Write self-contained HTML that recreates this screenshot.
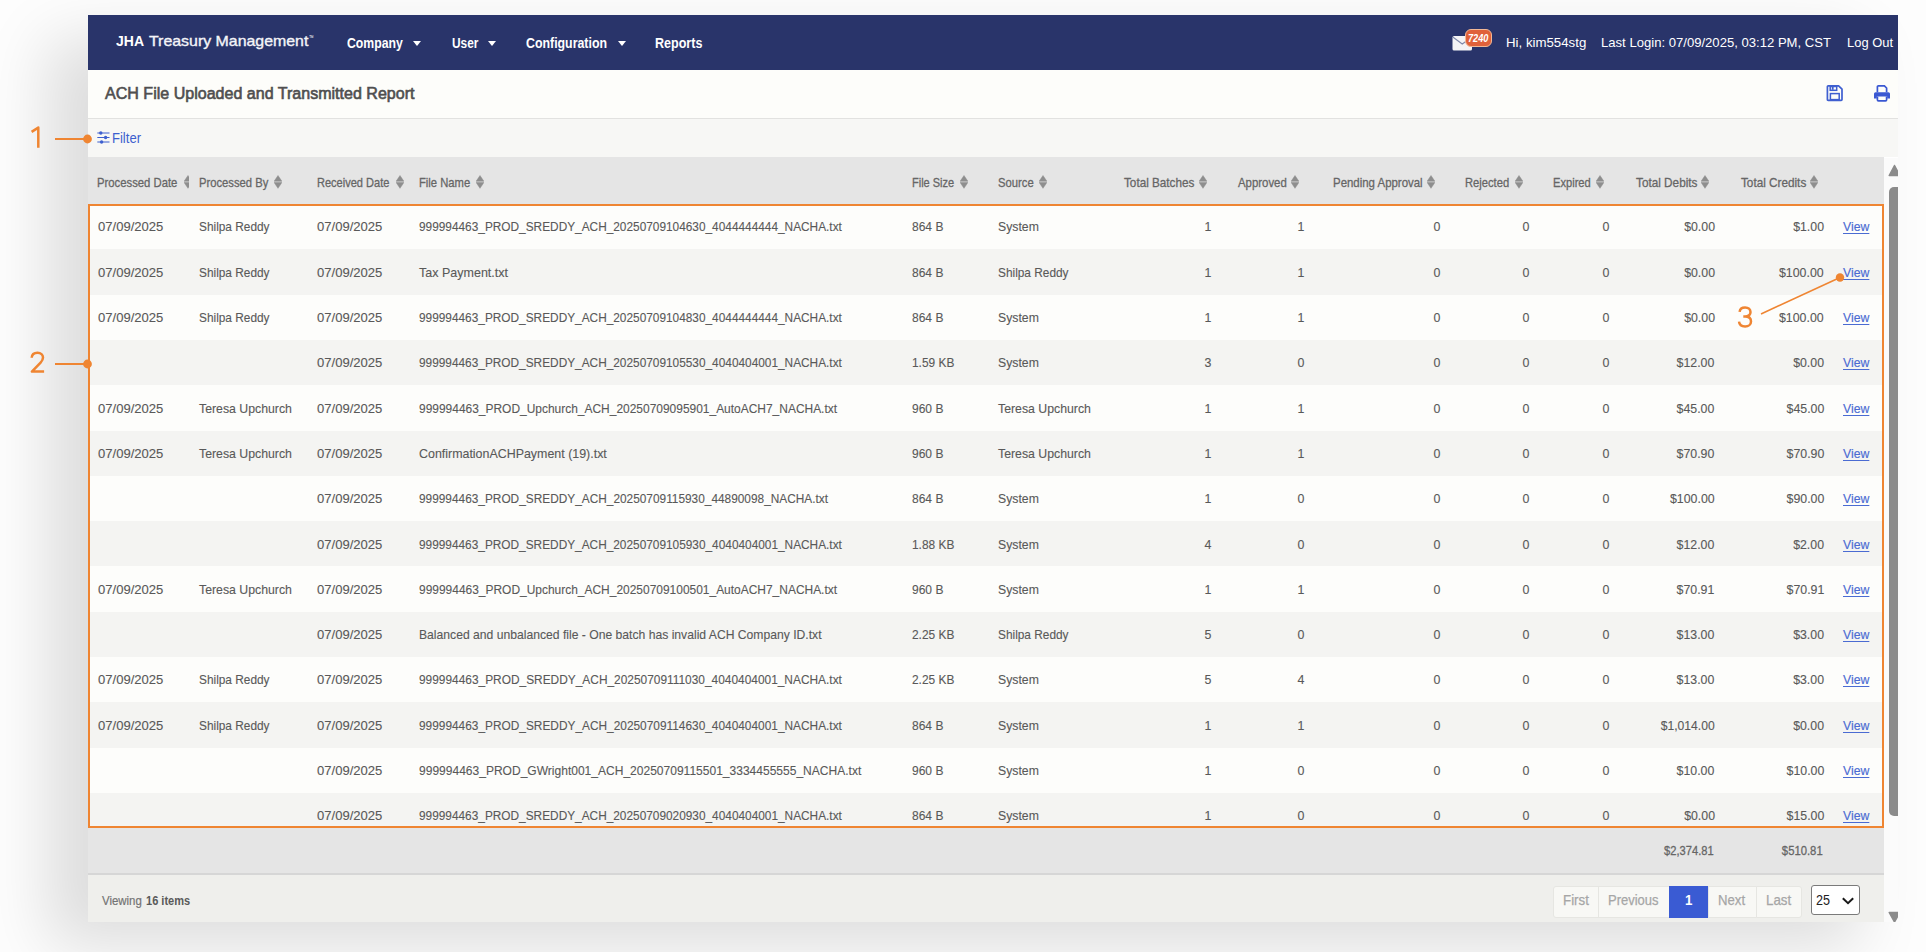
<!DOCTYPE html>
<html><head><meta charset="utf-8"><title>ACH File Uploaded and Transmitted Report</title>
<style>
html,body{margin:0;padding:0;}
body{width:1926px;height:952px;position:relative;overflow:hidden;background:#fdfdfd;font-family:"Liberation Sans", sans-serif;}
.abs{position:absolute;}
</style></head><body>
<!-- frame shadow -->
<div class="abs" style="left:88px;top:15px;width:1810px;height:907px;box-shadow:-40px 24px 60px rgba(0,0,0,0.13);background:#fff"></div>
<!-- nav -->
<div class="abs" style="left:88px;top:15px;width:1810px;height:54.5px;background:#29346a"></div>
<!-- title band -->
<div class="abs" style="left:88px;top:69.5px;width:1810px;height:48.5px;background:#fdfdfa;border-bottom:1px solid #e2e2e0"></div>
<!-- filter band -->
<div class="abs" style="left:88px;top:119px;width:1810px;height:38.2px;background:#f7f7f5"></div>
<!-- header -->
<div class="abs" style="left:88px;top:157.2px;width:1796px;height:46.8px;background:#e5e5e5"></div>
<!-- rows -->
<div style="position:absolute;left:88px;top:204.00px;width:1796px;height:45.60px;background:#fdfdfb"></div>
<div style="position:absolute;left:88px;top:249.30px;width:1796px;height:45.60px;background:#f4f4f2"></div>
<div style="position:absolute;left:88px;top:294.60px;width:1796px;height:45.60px;background:#fdfdfb"></div>
<div style="position:absolute;left:88px;top:339.90px;width:1796px;height:45.60px;background:#f4f4f2"></div>
<div style="position:absolute;left:88px;top:385.20px;width:1796px;height:45.60px;background:#fdfdfb"></div>
<div style="position:absolute;left:88px;top:430.50px;width:1796px;height:45.60px;background:#f4f4f2"></div>
<div style="position:absolute;left:88px;top:475.80px;width:1796px;height:45.60px;background:#fdfdfb"></div>
<div style="position:absolute;left:88px;top:521.10px;width:1796px;height:45.60px;background:#f4f4f2"></div>
<div style="position:absolute;left:88px;top:566.40px;width:1796px;height:45.60px;background:#fdfdfb"></div>
<div style="position:absolute;left:88px;top:611.70px;width:1796px;height:45.60px;background:#f4f4f2"></div>
<div style="position:absolute;left:88px;top:657.00px;width:1796px;height:45.60px;background:#fdfdfb"></div>
<div style="position:absolute;left:88px;top:702.30px;width:1796px;height:45.60px;background:#f4f4f2"></div>
<div style="position:absolute;left:88px;top:747.60px;width:1796px;height:45.60px;background:#fdfdfb"></div>
<div style="position:absolute;left:88px;top:792.90px;width:1796px;height:45.60px;background:#f4f4f2"></div>
<!-- orange box -->
<div class="abs" style="left:88px;top:204px;width:1792px;height:620px;border:2px solid #ef8532"></div>
<!-- totals -->
<div class="abs" style="left:88px;top:828px;width:1796px;height:45px;background:#e5e5e5"></div>
<div class="abs" style="left:88px;top:873px;width:1796px;height:2px;background:#d6d6d6"></div>
<!-- footer -->
<div class="abs" style="left:88px;top:875px;width:1796px;height:47px;background:#efefec"></div>
<!-- scrollbar -->
<div class="abs" style="left:1884px;top:157.5px;width:14px;height:764.5px;background:#fbfbfb;overflow:hidden">
<div class="abs" style="left:5px;top:29.5px;width:14px;height:629px;background:#8b8b8b;border-radius:5px"></div>
<svg class="abs" style="left:0;top:2.5px" width="14" height="20" viewBox="0 0 14 20"><path d="M5.2 15.5 L10.5 5.5 L15.8 15.5 Z" fill="#8b8b8b" stroke="#8b8b8b" stroke-width="1.5" stroke-linejoin="round"/></svg>
<svg class="abs" style="left:0;top:748.5px" width="14" height="16" viewBox="0 0 14 16"><path d="M5.2 6.5 L10.5 16 L15.8 6.5 Z" fill="#8b8b8b" stroke="#8b8b8b" stroke-width="1.5" stroke-linejoin="round"/></svg>
</div>
<!-- right cover of frame beyond scrollbar -->
<!-- envelope + badge -->
<svg class="abs" style="left:1452px;top:35px" width="21" height="16" viewBox="0 0 21 16"><rect x="0.5" y="1" width="19.5" height="14.5" rx="1.5" fill="#f4f4f6"/><path d="M0.8 2 L10.25 9 L20 2" stroke="#7f88a8" stroke-width="1.1" fill="none"/></svg>
<div class="abs" style="left:1465px;top:29px;width:25px;height:15.5px;border-radius:6px;background:#e0613a;border:1px solid #f2b896"></div>
<!-- save icon -->
<svg class="abs" style="left:1826px;top:84px" width="18" height="18" viewBox="0 0 18 18">
<path d="M2.2 1.8 H12.6 L16 5.2 V15.6 Q16 16.4 15.2 16.4 H2.2 Q1.4 16.4 1.4 15.6 V2.6 Q1.4 1.8 2.2 1.8 Z" fill="none" stroke="#3f5fd0" stroke-width="1.7" stroke-linejoin="round"/>
<rect x="4.2" y="2.5" width="6.5" height="3.8" fill="none" stroke="#3f5fd0" stroke-width="1.5"/>
<rect x="5.8" y="2.8" width="1.8" height="3" fill="#3f5fd0"/>
<rect x="4.4" y="9.6" width="8.8" height="6" fill="none" stroke="#3f5fd0" stroke-width="1.5"/>
</svg>
<!-- print icon -->
<svg class="abs" style="left:1873px;top:84px" width="18" height="18" viewBox="0 0 18 18">
<path d="M4.4 8.3 V2.8 Q4.4 1.8 5.4 1.8 H11.4 L13.6 4 V8.3" fill="none" stroke="#3a58d2" stroke-width="1.7"/>
<path d="M2.6 8.2 H15.4 Q17 8.2 17 9.8 V14.4 H14.2 V12.6 H3.8 V14.4 H1 V9.8 Q1 8.2 2.6 8.2 Z" fill="#3a58d2"/>
<path d="M4.4 12.6 V15.8 Q4.4 16.9 5.4 16.9 H12.6 Q13.6 16.9 13.6 15.8 V12.6" fill="none" stroke="#3a58d2" stroke-width="1.7"/>
</svg>
<!-- filter icon -->
<svg class="abs" style="left:96.5px;top:131px" width="13" height="13" viewBox="0 0 13 13">
<g stroke="#3d5fcf" stroke-width="1"><line x1="0.3" y1="2" x2="12.5" y2="2"/><line x1="0.3" y1="6.5" x2="12.5" y2="6.5"/><line x1="0.3" y1="11" x2="12.5" y2="11"/></g>
<g fill="#3d5fcf"><circle cx="3.8" cy="2" r="1.7"/><circle cx="8.6" cy="6.5" r="1.7"/><circle cx="4.6" cy="11" r="1.7"/></g>
</svg>
<div style="position:absolute;left:413px;top:40.5px;width:0;height:0;border-left:4px solid transparent;border-right:4px solid transparent;border-top:5px solid #fff"></div>
<div style="position:absolute;left:488.3px;top:40.5px;width:0;height:0;border-left:4px solid transparent;border-right:4px solid transparent;border-top:5px solid #fff"></div>
<div style="position:absolute;left:617.7px;top:40.5px;width:0;height:0;border-left:4px solid transparent;border-right:4px solid transparent;border-top:5px solid #fff"></div>
<svg style="position:absolute;left:183.5px;top:174.5px;overflow:hidden" width="5.8" height="14" viewBox="0 0 5.8 14"><path d="M4 0.5 L7.9 6.3 L0.1 6.3 Z M4 13.3 L7.9 7.5 L0.1 7.5 Z" fill="#8e8e8e" stroke="#8e8e8e" stroke-width="0.5" stroke-linejoin="round"/></svg>
<svg style="position:absolute;left:273.7px;top:174.5px;overflow:hidden" width="8" height="14" viewBox="0 0 8 14"><path d="M4 0.5 L7.9 6.3 L0.1 6.3 Z M4 13.3 L7.9 7.5 L0.1 7.5 Z" fill="#8e8e8e" stroke="#8e8e8e" stroke-width="0.5" stroke-linejoin="round"/></svg>
<svg style="position:absolute;left:396px;top:174.5px;overflow:hidden" width="8" height="14" viewBox="0 0 8 14"><path d="M4 0.5 L7.9 6.3 L0.1 6.3 Z M4 13.3 L7.9 7.5 L0.1 7.5 Z" fill="#8e8e8e" stroke="#8e8e8e" stroke-width="0.5" stroke-linejoin="round"/></svg>
<svg style="position:absolute;left:475.8px;top:174.5px;overflow:hidden" width="8" height="14" viewBox="0 0 8 14"><path d="M4 0.5 L7.9 6.3 L0.1 6.3 Z M4 13.3 L7.9 7.5 L0.1 7.5 Z" fill="#8e8e8e" stroke="#8e8e8e" stroke-width="0.5" stroke-linejoin="round"/></svg>
<svg style="position:absolute;left:960px;top:174.5px;overflow:hidden" width="8" height="14" viewBox="0 0 8 14"><path d="M4 0.5 L7.9 6.3 L0.1 6.3 Z M4 13.3 L7.9 7.5 L0.1 7.5 Z" fill="#8e8e8e" stroke="#8e8e8e" stroke-width="0.5" stroke-linejoin="round"/></svg>
<svg style="position:absolute;left:1039.3px;top:174.5px;overflow:hidden" width="8" height="14" viewBox="0 0 8 14"><path d="M4 0.5 L7.9 6.3 L0.1 6.3 Z M4 13.3 L7.9 7.5 L0.1 7.5 Z" fill="#8e8e8e" stroke="#8e8e8e" stroke-width="0.5" stroke-linejoin="round"/></svg>
<svg style="position:absolute;left:1198.8px;top:174.5px;overflow:hidden" width="8" height="14" viewBox="0 0 8 14"><path d="M4 0.5 L7.9 6.3 L0.1 6.3 Z M4 13.3 L7.9 7.5 L0.1 7.5 Z" fill="#8e8e8e" stroke="#8e8e8e" stroke-width="0.5" stroke-linejoin="round"/></svg>
<svg style="position:absolute;left:1290.7px;top:174.5px;overflow:hidden" width="8" height="14" viewBox="0 0 8 14"><path d="M4 0.5 L7.9 6.3 L0.1 6.3 Z M4 13.3 L7.9 7.5 L0.1 7.5 Z" fill="#8e8e8e" stroke="#8e8e8e" stroke-width="0.5" stroke-linejoin="round"/></svg>
<svg style="position:absolute;left:1427.4px;top:174.5px;overflow:hidden" width="8" height="14" viewBox="0 0 8 14"><path d="M4 0.5 L7.9 6.3 L0.1 6.3 Z M4 13.3 L7.9 7.5 L0.1 7.5 Z" fill="#8e8e8e" stroke="#8e8e8e" stroke-width="0.5" stroke-linejoin="round"/></svg>
<svg style="position:absolute;left:1515.4px;top:174.5px;overflow:hidden" width="8" height="14" viewBox="0 0 8 14"><path d="M4 0.5 L7.9 6.3 L0.1 6.3 Z M4 13.3 L7.9 7.5 L0.1 7.5 Z" fill="#8e8e8e" stroke="#8e8e8e" stroke-width="0.5" stroke-linejoin="round"/></svg>
<svg style="position:absolute;left:1596px;top:174.5px;overflow:hidden" width="8" height="14" viewBox="0 0 8 14"><path d="M4 0.5 L7.9 6.3 L0.1 6.3 Z M4 13.3 L7.9 7.5 L0.1 7.5 Z" fill="#8e8e8e" stroke="#8e8e8e" stroke-width="0.5" stroke-linejoin="round"/></svg>
<svg style="position:absolute;left:1701px;top:174.5px;overflow:hidden" width="8" height="14" viewBox="0 0 8 14"><path d="M4 0.5 L7.9 6.3 L0.1 6.3 Z M4 13.3 L7.9 7.5 L0.1 7.5 Z" fill="#8e8e8e" stroke="#8e8e8e" stroke-width="0.5" stroke-linejoin="round"/></svg>
<svg style="position:absolute;left:1810px;top:174.5px;overflow:hidden" width="8" height="14" viewBox="0 0 8 14"><path d="M4 0.5 L7.9 6.3 L0.1 6.3 Z M4 13.3 L7.9 7.5 L0.1 7.5 Z" fill="#8e8e8e" stroke="#8e8e8e" stroke-width="0.5" stroke-linejoin="round"/></svg>
<div style="position:absolute;left:1553px;top:886px;width:44.0px;height:30px;background:#f8f8f5;border:1px solid #e6e6e2;border-radius:3px 0 0 3px;"></div>
<div style="position:absolute;left:1598px;top:886px;width:70.3px;height:30px;background:#f8f8f5;border:1px solid #e6e6e2;"></div>
<div style="position:absolute;left:1669.3px;top:886px;width:38.7px;height:32px;background:#3a5bd3"></div>
<div style="position:absolute;left:1708px;top:886px;width:47.0px;height:30px;background:#f8f8f5;border:1px solid #e6e6e2;"></div>
<div style="position:absolute;left:1756px;top:886px;width:44.0px;height:30px;background:#f8f8f5;border:1px solid #e6e6e2;border-radius:0 3px 3px 0;"></div>
<div style="position:absolute;left:1811px;top:885px;width:46.5px;height:28px;background:#fff;border:1.5px solid #7a7a7a;border-radius:3px"></div>
<svg style="position:absolute;left:1841px;top:896px" width="14" height="10" viewBox="0 0 14 10"><path d="M1.8 2.2 L7 7.2 L12.2 2.2" stroke="#1a1a1a" stroke-width="2" fill="none"/></svg>
<span style="position:absolute;white-space:pre;font-family:'Liberation Sans', sans-serif;font-size:15px;font-weight:700;color:#fff;line-height:normal;left:115.60px;transform-origin:0 0;top:32.48px;transform:scaleX(0.9328);">JHA</span>
<span style="position:absolute;white-space:pre;font-family:'Liberation Sans', sans-serif;font-size:15px;font-weight:400;color:#f4f4f8;line-height:normal;left:148.60px;transform-origin:0 0;top:32.48px;transform:scaleX(1.0601);-webkit-text-stroke:0.35px #f4f4f8;">Treasury Management</span>
<span style="position:absolute;white-space:pre;font-family:'Liberation Sans', sans-serif;font-size:7px;font-weight:400;color:#fff;line-height:normal;left:308.50px;transform-origin:0 0;top:34.09px;transform:scaleX(0.6429);">™</span>
<span style="position:absolute;white-space:pre;font-family:'Liberation Sans', sans-serif;font-size:14.2px;font-weight:700;color:#fff;line-height:normal;left:346.90px;transform-origin:0 0;top:35.31px;transform:scaleX(0.8632);">Company</span>
<span style="position:absolute;white-space:pre;font-family:'Liberation Sans', sans-serif;font-size:14.2px;font-weight:700;color:#fff;line-height:normal;left:451.50px;transform-origin:0 0;top:35.31px;transform:scaleX(0.8396);">User</span>
<span style="position:absolute;white-space:pre;font-family:'Liberation Sans', sans-serif;font-size:14.2px;font-weight:700;color:#fff;line-height:normal;left:526.40px;transform-origin:0 0;top:35.31px;transform:scaleX(0.8710);">Configuration</span>
<span style="position:absolute;white-space:pre;font-family:'Liberation Sans', sans-serif;font-size:14.2px;font-weight:700;color:#fff;line-height:normal;left:655.20px;transform-origin:0 0;top:35.31px;transform:scaleX(0.8842);">Reports</span>
<span style="position:absolute;white-space:pre;font-family:'Liberation Sans', sans-serif;font-size:13.6px;font-weight:400;color:#fff;line-height:normal;left:1506.10px;transform-origin:0 0;top:35.46px;transform:scaleX(0.9750);">Hi, kim554stg</span>
<span style="position:absolute;white-space:pre;font-family:'Liberation Sans', sans-serif;font-size:13.6px;font-weight:400;color:#fff;line-height:normal;left:1601.30px;transform-origin:0 0;top:35.46px;transform:scaleX(0.9631);">Last Login: 07/09/2025, 03:12 PM, CST</span>
<span style="position:absolute;white-space:pre;font-family:'Liberation Sans', sans-serif;font-size:13.6px;font-weight:400;color:#fff;line-height:normal;left:1846.70px;transform-origin:0 0;top:35.46px;transform:scaleX(0.9509);">Log Out</span>
<span style="position:absolute;white-space:pre;font-family:'Liberation Sans', sans-serif;font-size:11.2px;font-weight:700;color:#fff;line-height:normal;left:1467.80px;transform-origin:0 0;top:32.15px;transform:scaleX(0.8196);font-style:italic;">7240</span>
<span style="position:absolute;white-space:pre;font-family:'Liberation Sans', sans-serif;font-size:17.2px;font-weight:400;color:#4f4f4f;line-height:normal;left:105.30px;transform-origin:0 0;top:83.16px;transform:scaleX(0.9336);-webkit-text-stroke:0.65px #4f4f4f;">ACH File Uploaded and Transmitted Report</span>
<span style="position:absolute;white-space:pre;font-family:'Liberation Sans', sans-serif;font-size:14.2px;font-weight:400;color:#3d5fcf;line-height:normal;left:112.30px;transform-origin:0 0;top:130.41px;transform:scaleX(0.9197);">Filter</span>
<span style="position:absolute;white-space:pre;font-family:'Liberation Sans', sans-serif;font-size:13.2px;font-weight:400;color:#666;line-height:normal;left:97.40px;transform-origin:0 0;top:175.32px;transform:scaleX(0.8567);-webkit-text-stroke:0.3px #666;">Processed Date</span>
<span style="position:absolute;white-space:pre;font-family:'Liberation Sans', sans-serif;font-size:13.2px;font-weight:400;color:#666;line-height:normal;left:199.00px;transform-origin:0 0;top:175.32px;transform:scaleX(0.8526);-webkit-text-stroke:0.3px #666;">Processed By</span>
<span style="position:absolute;white-space:pre;font-family:'Liberation Sans', sans-serif;font-size:13.2px;font-weight:400;color:#666;line-height:normal;left:317.40px;transform-origin:0 0;top:175.32px;transform:scaleX(0.8368);-webkit-text-stroke:0.3px #666;">Received Date</span>
<span style="position:absolute;white-space:pre;font-family:'Liberation Sans', sans-serif;font-size:13.2px;font-weight:400;color:#666;line-height:normal;left:418.60px;transform-origin:0 0;top:175.32px;transform:scaleX(0.8527);-webkit-text-stroke:0.3px #666;">File Name</span>
<span style="position:absolute;white-space:pre;font-family:'Liberation Sans', sans-serif;font-size:13.2px;font-weight:400;color:#666;line-height:normal;left:912.00px;transform-origin:0 0;top:175.32px;transform:scaleX(0.8340);-webkit-text-stroke:0.3px #666;">File Size</span>
<span style="position:absolute;white-space:pre;font-family:'Liberation Sans', sans-serif;font-size:13.2px;font-weight:400;color:#666;line-height:normal;left:998.00px;transform-origin:0 0;top:175.32px;transform:scaleX(0.8527);-webkit-text-stroke:0.3px #666;">Source</span>
<span style="position:absolute;white-space:pre;font-family:'Liberation Sans', sans-serif;font-size:13.2px;font-weight:400;color:#666;line-height:normal;left:1124.40px;transform-origin:0 0;top:175.32px;transform:scaleX(0.8889);-webkit-text-stroke:0.3px #666;">Total Batches</span>
<span style="position:absolute;white-space:pre;font-family:'Liberation Sans', sans-serif;font-size:13.2px;font-weight:400;color:#666;line-height:normal;left:1237.60px;transform-origin:0 0;top:175.32px;transform:scaleX(0.8637);-webkit-text-stroke:0.3px #666;">Approved</span>
<span style="position:absolute;white-space:pre;font-family:'Liberation Sans', sans-serif;font-size:13.2px;font-weight:400;color:#666;line-height:normal;left:1332.50px;transform-origin:0 0;top:175.32px;transform:scaleX(0.8669);-webkit-text-stroke:0.3px #666;">Pending Approval</span>
<span style="position:absolute;white-space:pre;font-family:'Liberation Sans', sans-serif;font-size:13.2px;font-weight:400;color:#666;line-height:normal;left:1465.30px;transform-origin:0 0;top:175.32px;transform:scaleX(0.8479);-webkit-text-stroke:0.3px #666;">Rejected</span>
<span style="position:absolute;white-space:pre;font-family:'Liberation Sans', sans-serif;font-size:13.2px;font-weight:400;color:#666;line-height:normal;left:1552.50px;transform-origin:0 0;top:175.32px;transform:scaleX(0.8445);-webkit-text-stroke:0.3px #666;">Expired</span>
<span style="position:absolute;white-space:pre;font-family:'Liberation Sans', sans-serif;font-size:13.2px;font-weight:400;color:#666;line-height:normal;left:1636.00px;transform-origin:0 0;top:175.32px;transform:scaleX(0.8915);-webkit-text-stroke:0.3px #666;">Total Debits</span>
<span style="position:absolute;white-space:pre;font-family:'Liberation Sans', sans-serif;font-size:13.2px;font-weight:400;color:#666;line-height:normal;left:1741.20px;transform-origin:0 0;top:175.32px;transform:scaleX(0.8903);-webkit-text-stroke:0.3px #666;">Total Credits</span>
<span style="position:absolute;white-space:pre;font-family:'Liberation Sans', sans-serif;font-size:13.2px;font-weight:400;color:#595959;line-height:normal;left:97.50px;transform-origin:0 0;top:219.42px;transform:scaleX(0.9902);-webkit-text-stroke:0.12px #595959;">07/09/2025</span>
<span style="position:absolute;white-space:pre;font-family:'Liberation Sans', sans-serif;font-size:13.2px;font-weight:400;color:#595959;line-height:normal;left:199.00px;transform-origin:0 0;top:219.42px;transform:scaleX(0.8987);-webkit-text-stroke:0.12px #595959;">Shilpa Reddy</span>
<span style="position:absolute;white-space:pre;font-family:'Liberation Sans', sans-serif;font-size:13.2px;font-weight:400;color:#595959;line-height:normal;left:317.40px;transform-origin:0 0;top:219.42px;transform:scaleX(0.9902);-webkit-text-stroke:0.12px #595959;">07/09/2025</span>
<span style="position:absolute;white-space:pre;font-family:'Liberation Sans', sans-serif;font-size:13.2px;font-weight:400;color:#595959;line-height:normal;left:419.30px;transform-origin:0 0;top:219.42px;transform:scaleX(0.8984);-webkit-text-stroke:0.12px #595959;">999994463_PROD_SREDDY_ACH_20250709104630_4044444444_NACHA.txt</span>
<span style="position:absolute;white-space:pre;font-family:'Liberation Sans', sans-serif;font-size:13.2px;font-weight:400;color:#595959;line-height:normal;left:912.00px;transform-origin:0 0;top:219.42px;transform:scaleX(0.9116);-webkit-text-stroke:0.12px #595959;">864 B</span>
<span style="position:absolute;white-space:pre;font-family:'Liberation Sans', sans-serif;font-size:13.2px;font-weight:400;color:#595959;line-height:normal;left:998.00px;transform-origin:0 0;top:219.42px;transform:scaleX(0.9290);-webkit-text-stroke:0.12px #595959;">System</span>
<span style="position:absolute;white-space:pre;font-family:'Liberation Sans', sans-serif;font-size:13.2px;font-weight:400;color:#595959;line-height:normal;right:714.60px;transform-origin:100% 0;top:219.42px;transform:scaleX(0.9405);-webkit-text-stroke:0.12px #595959;">1</span>
<span style="position:absolute;white-space:pre;font-family:'Liberation Sans', sans-serif;font-size:13.2px;font-weight:400;color:#595959;line-height:normal;right:622.00px;transform-origin:100% 0;top:219.42px;transform:scaleX(0.9405);-webkit-text-stroke:0.12px #595959;">1</span>
<span style="position:absolute;white-space:pre;font-family:'Liberation Sans', sans-serif;font-size:13.2px;font-weight:400;color:#595959;line-height:normal;right:485.40px;transform-origin:100% 0;top:219.42px;transform:scaleX(0.9405);-webkit-text-stroke:0.12px #595959;">0</span>
<span style="position:absolute;white-space:pre;font-family:'Liberation Sans', sans-serif;font-size:13.2px;font-weight:400;color:#595959;line-height:normal;right:397.00px;transform-origin:100% 0;top:219.42px;transform:scaleX(0.9405);-webkit-text-stroke:0.12px #595959;">0</span>
<span style="position:absolute;white-space:pre;font-family:'Liberation Sans', sans-serif;font-size:13.2px;font-weight:400;color:#595959;line-height:normal;right:316.60px;transform-origin:100% 0;top:219.42px;transform:scaleX(0.9405);-webkit-text-stroke:0.12px #595959;">0</span>
<span style="position:absolute;white-space:pre;font-family:'Liberation Sans', sans-serif;font-size:13.2px;font-weight:400;color:#595959;line-height:normal;right:211.40px;transform-origin:100% 0;top:219.42px;transform:scaleX(0.9348);-webkit-text-stroke:0.12px #595959;">$0.00</span>
<span style="position:absolute;white-space:pre;font-family:'Liberation Sans', sans-serif;font-size:13.2px;font-weight:400;color:#595959;line-height:normal;right:102.00px;transform-origin:100% 0;top:219.42px;transform:scaleX(0.9348);-webkit-text-stroke:0.12px #595959;">$1.00</span>
<span style="position:absolute;white-space:pre;font-family:'Liberation Sans', sans-serif;font-size:13.2px;font-weight:400;color:#4a6bd2;line-height:normal;left:1843.00px;transform-origin:0 0;top:219.42px;transform:scaleX(0.9291);text-decoration:underline;text-decoration-thickness:1.3px;text-underline-offset:1.5px;-webkit-text-stroke:0.15px #4a6bd2;">View</span>
<span style="position:absolute;white-space:pre;font-family:'Liberation Sans', sans-serif;font-size:13.2px;font-weight:400;color:#595959;line-height:normal;left:97.50px;transform-origin:0 0;top:264.72px;transform:scaleX(0.9902);-webkit-text-stroke:0.12px #595959;">07/09/2025</span>
<span style="position:absolute;white-space:pre;font-family:'Liberation Sans', sans-serif;font-size:13.2px;font-weight:400;color:#595959;line-height:normal;left:199.00px;transform-origin:0 0;top:264.72px;transform:scaleX(0.8987);-webkit-text-stroke:0.12px #595959;">Shilpa Reddy</span>
<span style="position:absolute;white-space:pre;font-family:'Liberation Sans', sans-serif;font-size:13.2px;font-weight:400;color:#595959;line-height:normal;left:317.40px;transform-origin:0 0;top:264.72px;transform:scaleX(0.9902);-webkit-text-stroke:0.12px #595959;">07/09/2025</span>
<span style="position:absolute;white-space:pre;font-family:'Liberation Sans', sans-serif;font-size:13.2px;font-weight:400;color:#595959;line-height:normal;left:419.30px;transform-origin:0 0;top:264.72px;transform:scaleX(0.9486);-webkit-text-stroke:0.12px #595959;">Tax Payment.txt</span>
<span style="position:absolute;white-space:pre;font-family:'Liberation Sans', sans-serif;font-size:13.2px;font-weight:400;color:#595959;line-height:normal;left:912.00px;transform-origin:0 0;top:264.72px;transform:scaleX(0.9116);-webkit-text-stroke:0.12px #595959;">864 B</span>
<span style="position:absolute;white-space:pre;font-family:'Liberation Sans', sans-serif;font-size:13.2px;font-weight:400;color:#595959;line-height:normal;left:998.00px;transform-origin:0 0;top:264.72px;transform:scaleX(0.8987);-webkit-text-stroke:0.12px #595959;">Shilpa Reddy</span>
<span style="position:absolute;white-space:pre;font-family:'Liberation Sans', sans-serif;font-size:13.2px;font-weight:400;color:#595959;line-height:normal;right:714.60px;transform-origin:100% 0;top:264.72px;transform:scaleX(0.9405);-webkit-text-stroke:0.12px #595959;">1</span>
<span style="position:absolute;white-space:pre;font-family:'Liberation Sans', sans-serif;font-size:13.2px;font-weight:400;color:#595959;line-height:normal;right:622.00px;transform-origin:100% 0;top:264.72px;transform:scaleX(0.9405);-webkit-text-stroke:0.12px #595959;">1</span>
<span style="position:absolute;white-space:pre;font-family:'Liberation Sans', sans-serif;font-size:13.2px;font-weight:400;color:#595959;line-height:normal;right:485.40px;transform-origin:100% 0;top:264.72px;transform:scaleX(0.9405);-webkit-text-stroke:0.12px #595959;">0</span>
<span style="position:absolute;white-space:pre;font-family:'Liberation Sans', sans-serif;font-size:13.2px;font-weight:400;color:#595959;line-height:normal;right:397.00px;transform-origin:100% 0;top:264.72px;transform:scaleX(0.9405);-webkit-text-stroke:0.12px #595959;">0</span>
<span style="position:absolute;white-space:pre;font-family:'Liberation Sans', sans-serif;font-size:13.2px;font-weight:400;color:#595959;line-height:normal;right:316.60px;transform-origin:100% 0;top:264.72px;transform:scaleX(0.9405);-webkit-text-stroke:0.12px #595959;">0</span>
<span style="position:absolute;white-space:pre;font-family:'Liberation Sans', sans-serif;font-size:13.2px;font-weight:400;color:#595959;line-height:normal;right:211.40px;transform-origin:100% 0;top:264.72px;transform:scaleX(0.9348);-webkit-text-stroke:0.12px #595959;">$0.00</span>
<span style="position:absolute;white-space:pre;font-family:'Liberation Sans', sans-serif;font-size:13.2px;font-weight:400;color:#595959;line-height:normal;right:102.00px;transform-origin:100% 0;top:264.72px;transform:scaleX(0.9372);-webkit-text-stroke:0.12px #595959;">$100.00</span>
<span style="position:absolute;white-space:pre;font-family:'Liberation Sans', sans-serif;font-size:13.2px;font-weight:400;color:#4a6bd2;line-height:normal;left:1843.00px;transform-origin:0 0;top:264.72px;transform:scaleX(0.9291);text-decoration:underline;text-decoration-thickness:1.3px;text-underline-offset:1.5px;-webkit-text-stroke:0.15px #4a6bd2;">View</span>
<span style="position:absolute;white-space:pre;font-family:'Liberation Sans', sans-serif;font-size:13.2px;font-weight:400;color:#595959;line-height:normal;left:97.50px;transform-origin:0 0;top:310.02px;transform:scaleX(0.9902);-webkit-text-stroke:0.12px #595959;">07/09/2025</span>
<span style="position:absolute;white-space:pre;font-family:'Liberation Sans', sans-serif;font-size:13.2px;font-weight:400;color:#595959;line-height:normal;left:199.00px;transform-origin:0 0;top:310.02px;transform:scaleX(0.8987);-webkit-text-stroke:0.12px #595959;">Shilpa Reddy</span>
<span style="position:absolute;white-space:pre;font-family:'Liberation Sans', sans-serif;font-size:13.2px;font-weight:400;color:#595959;line-height:normal;left:317.40px;transform-origin:0 0;top:310.02px;transform:scaleX(0.9902);-webkit-text-stroke:0.12px #595959;">07/09/2025</span>
<span style="position:absolute;white-space:pre;font-family:'Liberation Sans', sans-serif;font-size:13.2px;font-weight:400;color:#595959;line-height:normal;left:419.30px;transform-origin:0 0;top:310.02px;transform:scaleX(0.8984);-webkit-text-stroke:0.12px #595959;">999994463_PROD_SREDDY_ACH_20250709104830_4044444444_NACHA.txt</span>
<span style="position:absolute;white-space:pre;font-family:'Liberation Sans', sans-serif;font-size:13.2px;font-weight:400;color:#595959;line-height:normal;left:912.00px;transform-origin:0 0;top:310.02px;transform:scaleX(0.9116);-webkit-text-stroke:0.12px #595959;">864 B</span>
<span style="position:absolute;white-space:pre;font-family:'Liberation Sans', sans-serif;font-size:13.2px;font-weight:400;color:#595959;line-height:normal;left:998.00px;transform-origin:0 0;top:310.02px;transform:scaleX(0.9290);-webkit-text-stroke:0.12px #595959;">System</span>
<span style="position:absolute;white-space:pre;font-family:'Liberation Sans', sans-serif;font-size:13.2px;font-weight:400;color:#595959;line-height:normal;right:714.60px;transform-origin:100% 0;top:310.02px;transform:scaleX(0.9405);-webkit-text-stroke:0.12px #595959;">1</span>
<span style="position:absolute;white-space:pre;font-family:'Liberation Sans', sans-serif;font-size:13.2px;font-weight:400;color:#595959;line-height:normal;right:622.00px;transform-origin:100% 0;top:310.02px;transform:scaleX(0.9405);-webkit-text-stroke:0.12px #595959;">1</span>
<span style="position:absolute;white-space:pre;font-family:'Liberation Sans', sans-serif;font-size:13.2px;font-weight:400;color:#595959;line-height:normal;right:485.40px;transform-origin:100% 0;top:310.02px;transform:scaleX(0.9405);-webkit-text-stroke:0.12px #595959;">0</span>
<span style="position:absolute;white-space:pre;font-family:'Liberation Sans', sans-serif;font-size:13.2px;font-weight:400;color:#595959;line-height:normal;right:397.00px;transform-origin:100% 0;top:310.02px;transform:scaleX(0.9405);-webkit-text-stroke:0.12px #595959;">0</span>
<span style="position:absolute;white-space:pre;font-family:'Liberation Sans', sans-serif;font-size:13.2px;font-weight:400;color:#595959;line-height:normal;right:316.60px;transform-origin:100% 0;top:310.02px;transform:scaleX(0.9405);-webkit-text-stroke:0.12px #595959;">0</span>
<span style="position:absolute;white-space:pre;font-family:'Liberation Sans', sans-serif;font-size:13.2px;font-weight:400;color:#595959;line-height:normal;right:211.40px;transform-origin:100% 0;top:310.02px;transform:scaleX(0.9348);-webkit-text-stroke:0.12px #595959;">$0.00</span>
<span style="position:absolute;white-space:pre;font-family:'Liberation Sans', sans-serif;font-size:13.2px;font-weight:400;color:#595959;line-height:normal;right:102.00px;transform-origin:100% 0;top:310.02px;transform:scaleX(0.9372);-webkit-text-stroke:0.12px #595959;">$100.00</span>
<span style="position:absolute;white-space:pre;font-family:'Liberation Sans', sans-serif;font-size:13.2px;font-weight:400;color:#4a6bd2;line-height:normal;left:1843.00px;transform-origin:0 0;top:310.02px;transform:scaleX(0.9291);text-decoration:underline;text-decoration-thickness:1.3px;text-underline-offset:1.5px;-webkit-text-stroke:0.15px #4a6bd2;">View</span>
<span style="position:absolute;white-space:pre;font-family:'Liberation Sans', sans-serif;font-size:13.2px;font-weight:400;color:#595959;line-height:normal;left:317.40px;transform-origin:0 0;top:355.32px;transform:scaleX(0.9902);-webkit-text-stroke:0.12px #595959;">07/09/2025</span>
<span style="position:absolute;white-space:pre;font-family:'Liberation Sans', sans-serif;font-size:13.2px;font-weight:400;color:#595959;line-height:normal;left:419.30px;transform-origin:0 0;top:355.32px;transform:scaleX(0.8984);-webkit-text-stroke:0.12px #595959;">999994463_PROD_SREDDY_ACH_20250709105530_4040404001_NACHA.txt</span>
<span style="position:absolute;white-space:pre;font-family:'Liberation Sans', sans-serif;font-size:13.2px;font-weight:400;color:#595959;line-height:normal;left:912.00px;transform-origin:0 0;top:355.32px;transform:scaleX(0.9027);-webkit-text-stroke:0.12px #595959;">1.59 KB</span>
<span style="position:absolute;white-space:pre;font-family:'Liberation Sans', sans-serif;font-size:13.2px;font-weight:400;color:#595959;line-height:normal;left:998.00px;transform-origin:0 0;top:355.32px;transform:scaleX(0.9290);-webkit-text-stroke:0.12px #595959;">System</span>
<span style="position:absolute;white-space:pre;font-family:'Liberation Sans', sans-serif;font-size:13.2px;font-weight:400;color:#595959;line-height:normal;right:714.60px;transform-origin:100% 0;top:355.32px;transform:scaleX(0.9405);-webkit-text-stroke:0.12px #595959;">3</span>
<span style="position:absolute;white-space:pre;font-family:'Liberation Sans', sans-serif;font-size:13.2px;font-weight:400;color:#595959;line-height:normal;right:622.00px;transform-origin:100% 0;top:355.32px;transform:scaleX(0.9405);-webkit-text-stroke:0.12px #595959;">0</span>
<span style="position:absolute;white-space:pre;font-family:'Liberation Sans', sans-serif;font-size:13.2px;font-weight:400;color:#595959;line-height:normal;right:485.40px;transform-origin:100% 0;top:355.32px;transform:scaleX(0.9405);-webkit-text-stroke:0.12px #595959;">0</span>
<span style="position:absolute;white-space:pre;font-family:'Liberation Sans', sans-serif;font-size:13.2px;font-weight:400;color:#595959;line-height:normal;right:397.00px;transform-origin:100% 0;top:355.32px;transform:scaleX(0.9405);-webkit-text-stroke:0.12px #595959;">0</span>
<span style="position:absolute;white-space:pre;font-family:'Liberation Sans', sans-serif;font-size:13.2px;font-weight:400;color:#595959;line-height:normal;right:316.60px;transform-origin:100% 0;top:355.32px;transform:scaleX(0.9405);-webkit-text-stroke:0.12px #595959;">0</span>
<span style="position:absolute;white-space:pre;font-family:'Liberation Sans', sans-serif;font-size:13.2px;font-weight:400;color:#595959;line-height:normal;right:211.40px;transform-origin:100% 0;top:355.32px;transform:scaleX(0.9362);-webkit-text-stroke:0.12px #595959;">$12.00</span>
<span style="position:absolute;white-space:pre;font-family:'Liberation Sans', sans-serif;font-size:13.2px;font-weight:400;color:#595959;line-height:normal;right:102.00px;transform-origin:100% 0;top:355.32px;transform:scaleX(0.9348);-webkit-text-stroke:0.12px #595959;">$0.00</span>
<span style="position:absolute;white-space:pre;font-family:'Liberation Sans', sans-serif;font-size:13.2px;font-weight:400;color:#4a6bd2;line-height:normal;left:1843.00px;transform-origin:0 0;top:355.32px;transform:scaleX(0.9291);text-decoration:underline;text-decoration-thickness:1.3px;text-underline-offset:1.5px;-webkit-text-stroke:0.15px #4a6bd2;">View</span>
<span style="position:absolute;white-space:pre;font-family:'Liberation Sans', sans-serif;font-size:13.2px;font-weight:400;color:#595959;line-height:normal;left:97.50px;transform-origin:0 0;top:400.62px;transform:scaleX(0.9902);-webkit-text-stroke:0.12px #595959;">07/09/2025</span>
<span style="position:absolute;white-space:pre;font-family:'Liberation Sans', sans-serif;font-size:13.2px;font-weight:400;color:#595959;line-height:normal;left:199.00px;transform-origin:0 0;top:400.62px;transform:scaleX(0.9323);-webkit-text-stroke:0.12px #595959;">Teresa Upchurch</span>
<span style="position:absolute;white-space:pre;font-family:'Liberation Sans', sans-serif;font-size:13.2px;font-weight:400;color:#595959;line-height:normal;left:317.40px;transform-origin:0 0;top:400.62px;transform:scaleX(0.9902);-webkit-text-stroke:0.12px #595959;">07/09/2025</span>
<span style="position:absolute;white-space:pre;font-family:'Liberation Sans', sans-serif;font-size:13.2px;font-weight:400;color:#595959;line-height:normal;left:419.30px;transform-origin:0 0;top:400.62px;transform:scaleX(0.9066);-webkit-text-stroke:0.12px #595959;">999994463_PROD_Upchurch_ACH_20250709095901_AutoACH7_NACHA.txt</span>
<span style="position:absolute;white-space:pre;font-family:'Liberation Sans', sans-serif;font-size:13.2px;font-weight:400;color:#595959;line-height:normal;left:912.00px;transform-origin:0 0;top:400.62px;transform:scaleX(0.9116);-webkit-text-stroke:0.12px #595959;">960 B</span>
<span style="position:absolute;white-space:pre;font-family:'Liberation Sans', sans-serif;font-size:13.2px;font-weight:400;color:#595959;line-height:normal;left:998.00px;transform-origin:0 0;top:400.62px;transform:scaleX(0.9323);-webkit-text-stroke:0.12px #595959;">Teresa Upchurch</span>
<span style="position:absolute;white-space:pre;font-family:'Liberation Sans', sans-serif;font-size:13.2px;font-weight:400;color:#595959;line-height:normal;right:714.60px;transform-origin:100% 0;top:400.62px;transform:scaleX(0.9405);-webkit-text-stroke:0.12px #595959;">1</span>
<span style="position:absolute;white-space:pre;font-family:'Liberation Sans', sans-serif;font-size:13.2px;font-weight:400;color:#595959;line-height:normal;right:622.00px;transform-origin:100% 0;top:400.62px;transform:scaleX(0.9405);-webkit-text-stroke:0.12px #595959;">1</span>
<span style="position:absolute;white-space:pre;font-family:'Liberation Sans', sans-serif;font-size:13.2px;font-weight:400;color:#595959;line-height:normal;right:485.40px;transform-origin:100% 0;top:400.62px;transform:scaleX(0.9405);-webkit-text-stroke:0.12px #595959;">0</span>
<span style="position:absolute;white-space:pre;font-family:'Liberation Sans', sans-serif;font-size:13.2px;font-weight:400;color:#595959;line-height:normal;right:397.00px;transform-origin:100% 0;top:400.62px;transform:scaleX(0.9405);-webkit-text-stroke:0.12px #595959;">0</span>
<span style="position:absolute;white-space:pre;font-family:'Liberation Sans', sans-serif;font-size:13.2px;font-weight:400;color:#595959;line-height:normal;right:316.60px;transform-origin:100% 0;top:400.62px;transform:scaleX(0.9405);-webkit-text-stroke:0.12px #595959;">0</span>
<span style="position:absolute;white-space:pre;font-family:'Liberation Sans', sans-serif;font-size:13.2px;font-weight:400;color:#595959;line-height:normal;right:211.40px;transform-origin:100% 0;top:400.62px;transform:scaleX(0.9362);-webkit-text-stroke:0.12px #595959;">$45.00</span>
<span style="position:absolute;white-space:pre;font-family:'Liberation Sans', sans-serif;font-size:13.2px;font-weight:400;color:#595959;line-height:normal;right:102.00px;transform-origin:100% 0;top:400.62px;transform:scaleX(0.9362);-webkit-text-stroke:0.12px #595959;">$45.00</span>
<span style="position:absolute;white-space:pre;font-family:'Liberation Sans', sans-serif;font-size:13.2px;font-weight:400;color:#4a6bd2;line-height:normal;left:1843.00px;transform-origin:0 0;top:400.62px;transform:scaleX(0.9291);text-decoration:underline;text-decoration-thickness:1.3px;text-underline-offset:1.5px;-webkit-text-stroke:0.15px #4a6bd2;">View</span>
<span style="position:absolute;white-space:pre;font-family:'Liberation Sans', sans-serif;font-size:13.2px;font-weight:400;color:#595959;line-height:normal;left:97.50px;transform-origin:0 0;top:445.92px;transform:scaleX(0.9902);-webkit-text-stroke:0.12px #595959;">07/09/2025</span>
<span style="position:absolute;white-space:pre;font-family:'Liberation Sans', sans-serif;font-size:13.2px;font-weight:400;color:#595959;line-height:normal;left:199.00px;transform-origin:0 0;top:445.92px;transform:scaleX(0.9323);-webkit-text-stroke:0.12px #595959;">Teresa Upchurch</span>
<span style="position:absolute;white-space:pre;font-family:'Liberation Sans', sans-serif;font-size:13.2px;font-weight:400;color:#595959;line-height:normal;left:317.40px;transform-origin:0 0;top:445.92px;transform:scaleX(0.9902);-webkit-text-stroke:0.12px #595959;">07/09/2025</span>
<span style="position:absolute;white-space:pre;font-family:'Liberation Sans', sans-serif;font-size:13.2px;font-weight:400;color:#595959;line-height:normal;left:419.30px;transform-origin:0 0;top:445.92px;transform:scaleX(0.9422);-webkit-text-stroke:0.12px #595959;">ConfirmationACHPayment (19).txt</span>
<span style="position:absolute;white-space:pre;font-family:'Liberation Sans', sans-serif;font-size:13.2px;font-weight:400;color:#595959;line-height:normal;left:912.00px;transform-origin:0 0;top:445.92px;transform:scaleX(0.9116);-webkit-text-stroke:0.12px #595959;">960 B</span>
<span style="position:absolute;white-space:pre;font-family:'Liberation Sans', sans-serif;font-size:13.2px;font-weight:400;color:#595959;line-height:normal;left:998.00px;transform-origin:0 0;top:445.92px;transform:scaleX(0.9323);-webkit-text-stroke:0.12px #595959;">Teresa Upchurch</span>
<span style="position:absolute;white-space:pre;font-family:'Liberation Sans', sans-serif;font-size:13.2px;font-weight:400;color:#595959;line-height:normal;right:714.60px;transform-origin:100% 0;top:445.92px;transform:scaleX(0.9405);-webkit-text-stroke:0.12px #595959;">1</span>
<span style="position:absolute;white-space:pre;font-family:'Liberation Sans', sans-serif;font-size:13.2px;font-weight:400;color:#595959;line-height:normal;right:622.00px;transform-origin:100% 0;top:445.92px;transform:scaleX(0.9405);-webkit-text-stroke:0.12px #595959;">1</span>
<span style="position:absolute;white-space:pre;font-family:'Liberation Sans', sans-serif;font-size:13.2px;font-weight:400;color:#595959;line-height:normal;right:485.40px;transform-origin:100% 0;top:445.92px;transform:scaleX(0.9405);-webkit-text-stroke:0.12px #595959;">0</span>
<span style="position:absolute;white-space:pre;font-family:'Liberation Sans', sans-serif;font-size:13.2px;font-weight:400;color:#595959;line-height:normal;right:397.00px;transform-origin:100% 0;top:445.92px;transform:scaleX(0.9405);-webkit-text-stroke:0.12px #595959;">0</span>
<span style="position:absolute;white-space:pre;font-family:'Liberation Sans', sans-serif;font-size:13.2px;font-weight:400;color:#595959;line-height:normal;right:316.60px;transform-origin:100% 0;top:445.92px;transform:scaleX(0.9405);-webkit-text-stroke:0.12px #595959;">0</span>
<span style="position:absolute;white-space:pre;font-family:'Liberation Sans', sans-serif;font-size:13.2px;font-weight:400;color:#595959;line-height:normal;right:211.40px;transform-origin:100% 0;top:445.92px;transform:scaleX(0.9362);-webkit-text-stroke:0.12px #595959;">$70.90</span>
<span style="position:absolute;white-space:pre;font-family:'Liberation Sans', sans-serif;font-size:13.2px;font-weight:400;color:#595959;line-height:normal;right:102.00px;transform-origin:100% 0;top:445.92px;transform:scaleX(0.9362);-webkit-text-stroke:0.12px #595959;">$70.90</span>
<span style="position:absolute;white-space:pre;font-family:'Liberation Sans', sans-serif;font-size:13.2px;font-weight:400;color:#4a6bd2;line-height:normal;left:1843.00px;transform-origin:0 0;top:445.92px;transform:scaleX(0.9291);text-decoration:underline;text-decoration-thickness:1.3px;text-underline-offset:1.5px;-webkit-text-stroke:0.15px #4a6bd2;">View</span>
<span style="position:absolute;white-space:pre;font-family:'Liberation Sans', sans-serif;font-size:13.2px;font-weight:400;color:#595959;line-height:normal;left:317.40px;transform-origin:0 0;top:491.22px;transform:scaleX(0.9902);-webkit-text-stroke:0.12px #595959;">07/09/2025</span>
<span style="position:absolute;white-space:pre;font-family:'Liberation Sans', sans-serif;font-size:13.2px;font-weight:400;color:#595959;line-height:normal;left:419.30px;transform-origin:0 0;top:491.22px;transform:scaleX(0.8989);-webkit-text-stroke:0.12px #595959;">999994463_PROD_SREDDY_ACH_20250709115930_44890098_NACHA.txt</span>
<span style="position:absolute;white-space:pre;font-family:'Liberation Sans', sans-serif;font-size:13.2px;font-weight:400;color:#595959;line-height:normal;left:912.00px;transform-origin:0 0;top:491.22px;transform:scaleX(0.9116);-webkit-text-stroke:0.12px #595959;">864 B</span>
<span style="position:absolute;white-space:pre;font-family:'Liberation Sans', sans-serif;font-size:13.2px;font-weight:400;color:#595959;line-height:normal;left:998.00px;transform-origin:0 0;top:491.22px;transform:scaleX(0.9290);-webkit-text-stroke:0.12px #595959;">System</span>
<span style="position:absolute;white-space:pre;font-family:'Liberation Sans', sans-serif;font-size:13.2px;font-weight:400;color:#595959;line-height:normal;right:714.60px;transform-origin:100% 0;top:491.22px;transform:scaleX(0.9405);-webkit-text-stroke:0.12px #595959;">1</span>
<span style="position:absolute;white-space:pre;font-family:'Liberation Sans', sans-serif;font-size:13.2px;font-weight:400;color:#595959;line-height:normal;right:622.00px;transform-origin:100% 0;top:491.22px;transform:scaleX(0.9405);-webkit-text-stroke:0.12px #595959;">0</span>
<span style="position:absolute;white-space:pre;font-family:'Liberation Sans', sans-serif;font-size:13.2px;font-weight:400;color:#595959;line-height:normal;right:485.40px;transform-origin:100% 0;top:491.22px;transform:scaleX(0.9405);-webkit-text-stroke:0.12px #595959;">0</span>
<span style="position:absolute;white-space:pre;font-family:'Liberation Sans', sans-serif;font-size:13.2px;font-weight:400;color:#595959;line-height:normal;right:397.00px;transform-origin:100% 0;top:491.22px;transform:scaleX(0.9405);-webkit-text-stroke:0.12px #595959;">0</span>
<span style="position:absolute;white-space:pre;font-family:'Liberation Sans', sans-serif;font-size:13.2px;font-weight:400;color:#595959;line-height:normal;right:316.60px;transform-origin:100% 0;top:491.22px;transform:scaleX(0.9405);-webkit-text-stroke:0.12px #595959;">0</span>
<span style="position:absolute;white-space:pre;font-family:'Liberation Sans', sans-serif;font-size:13.2px;font-weight:400;color:#595959;line-height:normal;right:211.40px;transform-origin:100% 0;top:491.22px;transform:scaleX(0.9372);-webkit-text-stroke:0.12px #595959;">$100.00</span>
<span style="position:absolute;white-space:pre;font-family:'Liberation Sans', sans-serif;font-size:13.2px;font-weight:400;color:#595959;line-height:normal;right:102.00px;transform-origin:100% 0;top:491.22px;transform:scaleX(0.9362);-webkit-text-stroke:0.12px #595959;">$90.00</span>
<span style="position:absolute;white-space:pre;font-family:'Liberation Sans', sans-serif;font-size:13.2px;font-weight:400;color:#4a6bd2;line-height:normal;left:1843.00px;transform-origin:0 0;top:491.22px;transform:scaleX(0.9291);text-decoration:underline;text-decoration-thickness:1.3px;text-underline-offset:1.5px;-webkit-text-stroke:0.15px #4a6bd2;">View</span>
<span style="position:absolute;white-space:pre;font-family:'Liberation Sans', sans-serif;font-size:13.2px;font-weight:400;color:#595959;line-height:normal;left:317.40px;transform-origin:0 0;top:536.52px;transform:scaleX(0.9902);-webkit-text-stroke:0.12px #595959;">07/09/2025</span>
<span style="position:absolute;white-space:pre;font-family:'Liberation Sans', sans-serif;font-size:13.2px;font-weight:400;color:#595959;line-height:normal;left:419.30px;transform-origin:0 0;top:536.52px;transform:scaleX(0.8984);-webkit-text-stroke:0.12px #595959;">999994463_PROD_SREDDY_ACH_20250709105930_4040404001_NACHA.txt</span>
<span style="position:absolute;white-space:pre;font-family:'Liberation Sans', sans-serif;font-size:13.2px;font-weight:400;color:#595959;line-height:normal;left:912.00px;transform-origin:0 0;top:536.52px;transform:scaleX(0.9027);-webkit-text-stroke:0.12px #595959;">1.88 KB</span>
<span style="position:absolute;white-space:pre;font-family:'Liberation Sans', sans-serif;font-size:13.2px;font-weight:400;color:#595959;line-height:normal;left:998.00px;transform-origin:0 0;top:536.52px;transform:scaleX(0.9290);-webkit-text-stroke:0.12px #595959;">System</span>
<span style="position:absolute;white-space:pre;font-family:'Liberation Sans', sans-serif;font-size:13.2px;font-weight:400;color:#595959;line-height:normal;right:714.60px;transform-origin:100% 0;top:536.52px;transform:scaleX(0.9405);-webkit-text-stroke:0.12px #595959;">4</span>
<span style="position:absolute;white-space:pre;font-family:'Liberation Sans', sans-serif;font-size:13.2px;font-weight:400;color:#595959;line-height:normal;right:622.00px;transform-origin:100% 0;top:536.52px;transform:scaleX(0.9405);-webkit-text-stroke:0.12px #595959;">0</span>
<span style="position:absolute;white-space:pre;font-family:'Liberation Sans', sans-serif;font-size:13.2px;font-weight:400;color:#595959;line-height:normal;right:485.40px;transform-origin:100% 0;top:536.52px;transform:scaleX(0.9405);-webkit-text-stroke:0.12px #595959;">0</span>
<span style="position:absolute;white-space:pre;font-family:'Liberation Sans', sans-serif;font-size:13.2px;font-weight:400;color:#595959;line-height:normal;right:397.00px;transform-origin:100% 0;top:536.52px;transform:scaleX(0.9405);-webkit-text-stroke:0.12px #595959;">0</span>
<span style="position:absolute;white-space:pre;font-family:'Liberation Sans', sans-serif;font-size:13.2px;font-weight:400;color:#595959;line-height:normal;right:316.60px;transform-origin:100% 0;top:536.52px;transform:scaleX(0.9405);-webkit-text-stroke:0.12px #595959;">0</span>
<span style="position:absolute;white-space:pre;font-family:'Liberation Sans', sans-serif;font-size:13.2px;font-weight:400;color:#595959;line-height:normal;right:211.40px;transform-origin:100% 0;top:536.52px;transform:scaleX(0.9362);-webkit-text-stroke:0.12px #595959;">$12.00</span>
<span style="position:absolute;white-space:pre;font-family:'Liberation Sans', sans-serif;font-size:13.2px;font-weight:400;color:#595959;line-height:normal;right:102.00px;transform-origin:100% 0;top:536.52px;transform:scaleX(0.9348);-webkit-text-stroke:0.12px #595959;">$2.00</span>
<span style="position:absolute;white-space:pre;font-family:'Liberation Sans', sans-serif;font-size:13.2px;font-weight:400;color:#4a6bd2;line-height:normal;left:1843.00px;transform-origin:0 0;top:536.52px;transform:scaleX(0.9291);text-decoration:underline;text-decoration-thickness:1.3px;text-underline-offset:1.5px;-webkit-text-stroke:0.15px #4a6bd2;">View</span>
<span style="position:absolute;white-space:pre;font-family:'Liberation Sans', sans-serif;font-size:13.2px;font-weight:400;color:#595959;line-height:normal;left:97.50px;transform-origin:0 0;top:581.82px;transform:scaleX(0.9902);-webkit-text-stroke:0.12px #595959;">07/09/2025</span>
<span style="position:absolute;white-space:pre;font-family:'Liberation Sans', sans-serif;font-size:13.2px;font-weight:400;color:#595959;line-height:normal;left:199.00px;transform-origin:0 0;top:581.82px;transform:scaleX(0.9323);-webkit-text-stroke:0.12px #595959;">Teresa Upchurch</span>
<span style="position:absolute;white-space:pre;font-family:'Liberation Sans', sans-serif;font-size:13.2px;font-weight:400;color:#595959;line-height:normal;left:317.40px;transform-origin:0 0;top:581.82px;transform:scaleX(0.9902);-webkit-text-stroke:0.12px #595959;">07/09/2025</span>
<span style="position:absolute;white-space:pre;font-family:'Liberation Sans', sans-serif;font-size:13.2px;font-weight:400;color:#595959;line-height:normal;left:419.30px;transform-origin:0 0;top:581.82px;transform:scaleX(0.9066);-webkit-text-stroke:0.12px #595959;">999994463_PROD_Upchurch_ACH_20250709100501_AutoACH7_NACHA.txt</span>
<span style="position:absolute;white-space:pre;font-family:'Liberation Sans', sans-serif;font-size:13.2px;font-weight:400;color:#595959;line-height:normal;left:912.00px;transform-origin:0 0;top:581.82px;transform:scaleX(0.9116);-webkit-text-stroke:0.12px #595959;">960 B</span>
<span style="position:absolute;white-space:pre;font-family:'Liberation Sans', sans-serif;font-size:13.2px;font-weight:400;color:#595959;line-height:normal;left:998.00px;transform-origin:0 0;top:581.82px;transform:scaleX(0.9290);-webkit-text-stroke:0.12px #595959;">System</span>
<span style="position:absolute;white-space:pre;font-family:'Liberation Sans', sans-serif;font-size:13.2px;font-weight:400;color:#595959;line-height:normal;right:714.60px;transform-origin:100% 0;top:581.82px;transform:scaleX(0.9405);-webkit-text-stroke:0.12px #595959;">1</span>
<span style="position:absolute;white-space:pre;font-family:'Liberation Sans', sans-serif;font-size:13.2px;font-weight:400;color:#595959;line-height:normal;right:622.00px;transform-origin:100% 0;top:581.82px;transform:scaleX(0.9405);-webkit-text-stroke:0.12px #595959;">1</span>
<span style="position:absolute;white-space:pre;font-family:'Liberation Sans', sans-serif;font-size:13.2px;font-weight:400;color:#595959;line-height:normal;right:485.40px;transform-origin:100% 0;top:581.82px;transform:scaleX(0.9405);-webkit-text-stroke:0.12px #595959;">0</span>
<span style="position:absolute;white-space:pre;font-family:'Liberation Sans', sans-serif;font-size:13.2px;font-weight:400;color:#595959;line-height:normal;right:397.00px;transform-origin:100% 0;top:581.82px;transform:scaleX(0.9405);-webkit-text-stroke:0.12px #595959;">0</span>
<span style="position:absolute;white-space:pre;font-family:'Liberation Sans', sans-serif;font-size:13.2px;font-weight:400;color:#595959;line-height:normal;right:316.60px;transform-origin:100% 0;top:581.82px;transform:scaleX(0.9405);-webkit-text-stroke:0.12px #595959;">0</span>
<span style="position:absolute;white-space:pre;font-family:'Liberation Sans', sans-serif;font-size:13.2px;font-weight:400;color:#595959;line-height:normal;right:211.40px;transform-origin:100% 0;top:581.82px;transform:scaleX(0.9362);-webkit-text-stroke:0.12px #595959;">$70.91</span>
<span style="position:absolute;white-space:pre;font-family:'Liberation Sans', sans-serif;font-size:13.2px;font-weight:400;color:#595959;line-height:normal;right:102.00px;transform-origin:100% 0;top:581.82px;transform:scaleX(0.9362);-webkit-text-stroke:0.12px #595959;">$70.91</span>
<span style="position:absolute;white-space:pre;font-family:'Liberation Sans', sans-serif;font-size:13.2px;font-weight:400;color:#4a6bd2;line-height:normal;left:1843.00px;transform-origin:0 0;top:581.82px;transform:scaleX(0.9291);text-decoration:underline;text-decoration-thickness:1.3px;text-underline-offset:1.5px;-webkit-text-stroke:0.15px #4a6bd2;">View</span>
<span style="position:absolute;white-space:pre;font-family:'Liberation Sans', sans-serif;font-size:13.2px;font-weight:400;color:#595959;line-height:normal;left:317.40px;transform-origin:0 0;top:627.12px;transform:scaleX(0.9902);-webkit-text-stroke:0.12px #595959;">07/09/2025</span>
<span style="position:absolute;white-space:pre;font-family:'Liberation Sans', sans-serif;font-size:13.2px;font-weight:400;color:#595959;line-height:normal;left:419.30px;transform-origin:0 0;top:627.12px;transform:scaleX(0.9214);-webkit-text-stroke:0.12px #595959;">Balanced and unbalanced file - One batch has invalid ACH Company ID.txt</span>
<span style="position:absolute;white-space:pre;font-family:'Liberation Sans', sans-serif;font-size:13.2px;font-weight:400;color:#595959;line-height:normal;left:912.00px;transform-origin:0 0;top:627.12px;transform:scaleX(0.9027);-webkit-text-stroke:0.12px #595959;">2.25 KB</span>
<span style="position:absolute;white-space:pre;font-family:'Liberation Sans', sans-serif;font-size:13.2px;font-weight:400;color:#595959;line-height:normal;left:998.00px;transform-origin:0 0;top:627.12px;transform:scaleX(0.8987);-webkit-text-stroke:0.12px #595959;">Shilpa Reddy</span>
<span style="position:absolute;white-space:pre;font-family:'Liberation Sans', sans-serif;font-size:13.2px;font-weight:400;color:#595959;line-height:normal;right:714.60px;transform-origin:100% 0;top:627.12px;transform:scaleX(0.9405);-webkit-text-stroke:0.12px #595959;">5</span>
<span style="position:absolute;white-space:pre;font-family:'Liberation Sans', sans-serif;font-size:13.2px;font-weight:400;color:#595959;line-height:normal;right:622.00px;transform-origin:100% 0;top:627.12px;transform:scaleX(0.9405);-webkit-text-stroke:0.12px #595959;">0</span>
<span style="position:absolute;white-space:pre;font-family:'Liberation Sans', sans-serif;font-size:13.2px;font-weight:400;color:#595959;line-height:normal;right:485.40px;transform-origin:100% 0;top:627.12px;transform:scaleX(0.9405);-webkit-text-stroke:0.12px #595959;">0</span>
<span style="position:absolute;white-space:pre;font-family:'Liberation Sans', sans-serif;font-size:13.2px;font-weight:400;color:#595959;line-height:normal;right:397.00px;transform-origin:100% 0;top:627.12px;transform:scaleX(0.9405);-webkit-text-stroke:0.12px #595959;">0</span>
<span style="position:absolute;white-space:pre;font-family:'Liberation Sans', sans-serif;font-size:13.2px;font-weight:400;color:#595959;line-height:normal;right:316.60px;transform-origin:100% 0;top:627.12px;transform:scaleX(0.9405);-webkit-text-stroke:0.12px #595959;">0</span>
<span style="position:absolute;white-space:pre;font-family:'Liberation Sans', sans-serif;font-size:13.2px;font-weight:400;color:#595959;line-height:normal;right:211.40px;transform-origin:100% 0;top:627.12px;transform:scaleX(0.9362);-webkit-text-stroke:0.12px #595959;">$13.00</span>
<span style="position:absolute;white-space:pre;font-family:'Liberation Sans', sans-serif;font-size:13.2px;font-weight:400;color:#595959;line-height:normal;right:102.00px;transform-origin:100% 0;top:627.12px;transform:scaleX(0.9348);-webkit-text-stroke:0.12px #595959;">$3.00</span>
<span style="position:absolute;white-space:pre;font-family:'Liberation Sans', sans-serif;font-size:13.2px;font-weight:400;color:#4a6bd2;line-height:normal;left:1843.00px;transform-origin:0 0;top:627.12px;transform:scaleX(0.9291);text-decoration:underline;text-decoration-thickness:1.3px;text-underline-offset:1.5px;-webkit-text-stroke:0.15px #4a6bd2;">View</span>
<span style="position:absolute;white-space:pre;font-family:'Liberation Sans', sans-serif;font-size:13.2px;font-weight:400;color:#595959;line-height:normal;left:97.50px;transform-origin:0 0;top:672.42px;transform:scaleX(0.9902);-webkit-text-stroke:0.12px #595959;">07/09/2025</span>
<span style="position:absolute;white-space:pre;font-family:'Liberation Sans', sans-serif;font-size:13.2px;font-weight:400;color:#595959;line-height:normal;left:199.00px;transform-origin:0 0;top:672.42px;transform:scaleX(0.8987);-webkit-text-stroke:0.12px #595959;">Shilpa Reddy</span>
<span style="position:absolute;white-space:pre;font-family:'Liberation Sans', sans-serif;font-size:13.2px;font-weight:400;color:#595959;line-height:normal;left:317.40px;transform-origin:0 0;top:672.42px;transform:scaleX(0.9902);-webkit-text-stroke:0.12px #595959;">07/09/2025</span>
<span style="position:absolute;white-space:pre;font-family:'Liberation Sans', sans-serif;font-size:13.2px;font-weight:400;color:#595959;line-height:normal;left:419.30px;transform-origin:0 0;top:672.42px;transform:scaleX(0.9022);-webkit-text-stroke:0.12px #595959;">999994463_PROD_SREDDY_ACH_20250709111030_4040404001_NACHA.txt</span>
<span style="position:absolute;white-space:pre;font-family:'Liberation Sans', sans-serif;font-size:13.2px;font-weight:400;color:#595959;line-height:normal;left:912.00px;transform-origin:0 0;top:672.42px;transform:scaleX(0.9027);-webkit-text-stroke:0.12px #595959;">2.25 KB</span>
<span style="position:absolute;white-space:pre;font-family:'Liberation Sans', sans-serif;font-size:13.2px;font-weight:400;color:#595959;line-height:normal;left:998.00px;transform-origin:0 0;top:672.42px;transform:scaleX(0.9290);-webkit-text-stroke:0.12px #595959;">System</span>
<span style="position:absolute;white-space:pre;font-family:'Liberation Sans', sans-serif;font-size:13.2px;font-weight:400;color:#595959;line-height:normal;right:714.60px;transform-origin:100% 0;top:672.42px;transform:scaleX(0.9405);-webkit-text-stroke:0.12px #595959;">5</span>
<span style="position:absolute;white-space:pre;font-family:'Liberation Sans', sans-serif;font-size:13.2px;font-weight:400;color:#595959;line-height:normal;right:622.00px;transform-origin:100% 0;top:672.42px;transform:scaleX(0.9405);-webkit-text-stroke:0.12px #595959;">4</span>
<span style="position:absolute;white-space:pre;font-family:'Liberation Sans', sans-serif;font-size:13.2px;font-weight:400;color:#595959;line-height:normal;right:485.40px;transform-origin:100% 0;top:672.42px;transform:scaleX(0.9405);-webkit-text-stroke:0.12px #595959;">0</span>
<span style="position:absolute;white-space:pre;font-family:'Liberation Sans', sans-serif;font-size:13.2px;font-weight:400;color:#595959;line-height:normal;right:397.00px;transform-origin:100% 0;top:672.42px;transform:scaleX(0.9405);-webkit-text-stroke:0.12px #595959;">0</span>
<span style="position:absolute;white-space:pre;font-family:'Liberation Sans', sans-serif;font-size:13.2px;font-weight:400;color:#595959;line-height:normal;right:316.60px;transform-origin:100% 0;top:672.42px;transform:scaleX(0.9405);-webkit-text-stroke:0.12px #595959;">0</span>
<span style="position:absolute;white-space:pre;font-family:'Liberation Sans', sans-serif;font-size:13.2px;font-weight:400;color:#595959;line-height:normal;right:211.40px;transform-origin:100% 0;top:672.42px;transform:scaleX(0.9362);-webkit-text-stroke:0.12px #595959;">$13.00</span>
<span style="position:absolute;white-space:pre;font-family:'Liberation Sans', sans-serif;font-size:13.2px;font-weight:400;color:#595959;line-height:normal;right:102.00px;transform-origin:100% 0;top:672.42px;transform:scaleX(0.9348);-webkit-text-stroke:0.12px #595959;">$3.00</span>
<span style="position:absolute;white-space:pre;font-family:'Liberation Sans', sans-serif;font-size:13.2px;font-weight:400;color:#4a6bd2;line-height:normal;left:1843.00px;transform-origin:0 0;top:672.42px;transform:scaleX(0.9291);text-decoration:underline;text-decoration-thickness:1.3px;text-underline-offset:1.5px;-webkit-text-stroke:0.15px #4a6bd2;">View</span>
<span style="position:absolute;white-space:pre;font-family:'Liberation Sans', sans-serif;font-size:13.2px;font-weight:400;color:#595959;line-height:normal;left:97.50px;transform-origin:0 0;top:717.72px;transform:scaleX(0.9902);-webkit-text-stroke:0.12px #595959;">07/09/2025</span>
<span style="position:absolute;white-space:pre;font-family:'Liberation Sans', sans-serif;font-size:13.2px;font-weight:400;color:#595959;line-height:normal;left:199.00px;transform-origin:0 0;top:717.72px;transform:scaleX(0.8987);-webkit-text-stroke:0.12px #595959;">Shilpa Reddy</span>
<span style="position:absolute;white-space:pre;font-family:'Liberation Sans', sans-serif;font-size:13.2px;font-weight:400;color:#595959;line-height:normal;left:317.40px;transform-origin:0 0;top:717.72px;transform:scaleX(0.9902);-webkit-text-stroke:0.12px #595959;">07/09/2025</span>
<span style="position:absolute;white-space:pre;font-family:'Liberation Sans', sans-serif;font-size:13.2px;font-weight:400;color:#595959;line-height:normal;left:419.30px;transform-origin:0 0;top:717.72px;transform:scaleX(0.9003);-webkit-text-stroke:0.12px #595959;">999994463_PROD_SREDDY_ACH_20250709114630_4040404001_NACHA.txt</span>
<span style="position:absolute;white-space:pre;font-family:'Liberation Sans', sans-serif;font-size:13.2px;font-weight:400;color:#595959;line-height:normal;left:912.00px;transform-origin:0 0;top:717.72px;transform:scaleX(0.9116);-webkit-text-stroke:0.12px #595959;">864 B</span>
<span style="position:absolute;white-space:pre;font-family:'Liberation Sans', sans-serif;font-size:13.2px;font-weight:400;color:#595959;line-height:normal;left:998.00px;transform-origin:0 0;top:717.72px;transform:scaleX(0.9290);-webkit-text-stroke:0.12px #595959;">System</span>
<span style="position:absolute;white-space:pre;font-family:'Liberation Sans', sans-serif;font-size:13.2px;font-weight:400;color:#595959;line-height:normal;right:714.60px;transform-origin:100% 0;top:717.72px;transform:scaleX(0.9405);-webkit-text-stroke:0.12px #595959;">1</span>
<span style="position:absolute;white-space:pre;font-family:'Liberation Sans', sans-serif;font-size:13.2px;font-weight:400;color:#595959;line-height:normal;right:622.00px;transform-origin:100% 0;top:717.72px;transform:scaleX(0.9405);-webkit-text-stroke:0.12px #595959;">1</span>
<span style="position:absolute;white-space:pre;font-family:'Liberation Sans', sans-serif;font-size:13.2px;font-weight:400;color:#595959;line-height:normal;right:485.40px;transform-origin:100% 0;top:717.72px;transform:scaleX(0.9405);-webkit-text-stroke:0.12px #595959;">0</span>
<span style="position:absolute;white-space:pre;font-family:'Liberation Sans', sans-serif;font-size:13.2px;font-weight:400;color:#595959;line-height:normal;right:397.00px;transform-origin:100% 0;top:717.72px;transform:scaleX(0.9405);-webkit-text-stroke:0.12px #595959;">0</span>
<span style="position:absolute;white-space:pre;font-family:'Liberation Sans', sans-serif;font-size:13.2px;font-weight:400;color:#595959;line-height:normal;right:316.60px;transform-origin:100% 0;top:717.72px;transform:scaleX(0.9405);-webkit-text-stroke:0.12px #595959;">0</span>
<span style="position:absolute;white-space:pre;font-family:'Liberation Sans', sans-serif;font-size:13.2px;font-weight:400;color:#595959;line-height:normal;right:211.40px;transform-origin:100% 0;top:717.72px;transform:scaleX(0.9204);-webkit-text-stroke:0.12px #595959;">$1,014.00</span>
<span style="position:absolute;white-space:pre;font-family:'Liberation Sans', sans-serif;font-size:13.2px;font-weight:400;color:#595959;line-height:normal;right:102.00px;transform-origin:100% 0;top:717.72px;transform:scaleX(0.9348);-webkit-text-stroke:0.12px #595959;">$0.00</span>
<span style="position:absolute;white-space:pre;font-family:'Liberation Sans', sans-serif;font-size:13.2px;font-weight:400;color:#4a6bd2;line-height:normal;left:1843.00px;transform-origin:0 0;top:717.72px;transform:scaleX(0.9291);text-decoration:underline;text-decoration-thickness:1.3px;text-underline-offset:1.5px;-webkit-text-stroke:0.15px #4a6bd2;">View</span>
<span style="position:absolute;white-space:pre;font-family:'Liberation Sans', sans-serif;font-size:13.2px;font-weight:400;color:#595959;line-height:normal;left:317.40px;transform-origin:0 0;top:763.02px;transform:scaleX(0.9902);-webkit-text-stroke:0.12px #595959;">07/09/2025</span>
<span style="position:absolute;white-space:pre;font-family:'Liberation Sans', sans-serif;font-size:13.2px;font-weight:400;color:#595959;line-height:normal;left:419.30px;transform-origin:0 0;top:763.02px;transform:scaleX(0.9121);-webkit-text-stroke:0.12px #595959;">999994463_PROD_GWright001_ACH_20250709115501_3334455555_NACHA.txt</span>
<span style="position:absolute;white-space:pre;font-family:'Liberation Sans', sans-serif;font-size:13.2px;font-weight:400;color:#595959;line-height:normal;left:912.00px;transform-origin:0 0;top:763.02px;transform:scaleX(0.9116);-webkit-text-stroke:0.12px #595959;">960 B</span>
<span style="position:absolute;white-space:pre;font-family:'Liberation Sans', sans-serif;font-size:13.2px;font-weight:400;color:#595959;line-height:normal;left:998.00px;transform-origin:0 0;top:763.02px;transform:scaleX(0.9290);-webkit-text-stroke:0.12px #595959;">System</span>
<span style="position:absolute;white-space:pre;font-family:'Liberation Sans', sans-serif;font-size:13.2px;font-weight:400;color:#595959;line-height:normal;right:714.60px;transform-origin:100% 0;top:763.02px;transform:scaleX(0.9405);-webkit-text-stroke:0.12px #595959;">1</span>
<span style="position:absolute;white-space:pre;font-family:'Liberation Sans', sans-serif;font-size:13.2px;font-weight:400;color:#595959;line-height:normal;right:622.00px;transform-origin:100% 0;top:763.02px;transform:scaleX(0.9405);-webkit-text-stroke:0.12px #595959;">0</span>
<span style="position:absolute;white-space:pre;font-family:'Liberation Sans', sans-serif;font-size:13.2px;font-weight:400;color:#595959;line-height:normal;right:485.40px;transform-origin:100% 0;top:763.02px;transform:scaleX(0.9405);-webkit-text-stroke:0.12px #595959;">0</span>
<span style="position:absolute;white-space:pre;font-family:'Liberation Sans', sans-serif;font-size:13.2px;font-weight:400;color:#595959;line-height:normal;right:397.00px;transform-origin:100% 0;top:763.02px;transform:scaleX(0.9405);-webkit-text-stroke:0.12px #595959;">0</span>
<span style="position:absolute;white-space:pre;font-family:'Liberation Sans', sans-serif;font-size:13.2px;font-weight:400;color:#595959;line-height:normal;right:316.60px;transform-origin:100% 0;top:763.02px;transform:scaleX(0.9405);-webkit-text-stroke:0.12px #595959;">0</span>
<span style="position:absolute;white-space:pre;font-family:'Liberation Sans', sans-serif;font-size:13.2px;font-weight:400;color:#595959;line-height:normal;right:211.40px;transform-origin:100% 0;top:763.02px;transform:scaleX(0.9362);-webkit-text-stroke:0.12px #595959;">$10.00</span>
<span style="position:absolute;white-space:pre;font-family:'Liberation Sans', sans-serif;font-size:13.2px;font-weight:400;color:#595959;line-height:normal;right:102.00px;transform-origin:100% 0;top:763.02px;transform:scaleX(0.9362);-webkit-text-stroke:0.12px #595959;">$10.00</span>
<span style="position:absolute;white-space:pre;font-family:'Liberation Sans', sans-serif;font-size:13.2px;font-weight:400;color:#4a6bd2;line-height:normal;left:1843.00px;transform-origin:0 0;top:763.02px;transform:scaleX(0.9291);text-decoration:underline;text-decoration-thickness:1.3px;text-underline-offset:1.5px;-webkit-text-stroke:0.15px #4a6bd2;">View</span>
<span style="position:absolute;white-space:pre;font-family:'Liberation Sans', sans-serif;font-size:13.2px;font-weight:400;color:#595959;line-height:normal;left:317.40px;transform-origin:0 0;top:808.32px;transform:scaleX(0.9902);-webkit-text-stroke:0.12px #595959;">07/09/2025</span>
<span style="position:absolute;white-space:pre;font-family:'Liberation Sans', sans-serif;font-size:13.2px;font-weight:400;color:#595959;line-height:normal;left:419.30px;transform-origin:0 0;top:808.32px;transform:scaleX(0.8984);-webkit-text-stroke:0.12px #595959;">999994463_PROD_SREDDY_ACH_20250709020930_4040404001_NACHA.txt</span>
<span style="position:absolute;white-space:pre;font-family:'Liberation Sans', sans-serif;font-size:13.2px;font-weight:400;color:#595959;line-height:normal;left:912.00px;transform-origin:0 0;top:808.32px;transform:scaleX(0.9116);-webkit-text-stroke:0.12px #595959;">864 B</span>
<span style="position:absolute;white-space:pre;font-family:'Liberation Sans', sans-serif;font-size:13.2px;font-weight:400;color:#595959;line-height:normal;left:998.00px;transform-origin:0 0;top:808.32px;transform:scaleX(0.9290);-webkit-text-stroke:0.12px #595959;">System</span>
<span style="position:absolute;white-space:pre;font-family:'Liberation Sans', sans-serif;font-size:13.2px;font-weight:400;color:#595959;line-height:normal;right:714.60px;transform-origin:100% 0;top:808.32px;transform:scaleX(0.9405);-webkit-text-stroke:0.12px #595959;">1</span>
<span style="position:absolute;white-space:pre;font-family:'Liberation Sans', sans-serif;font-size:13.2px;font-weight:400;color:#595959;line-height:normal;right:622.00px;transform-origin:100% 0;top:808.32px;transform:scaleX(0.9405);-webkit-text-stroke:0.12px #595959;">0</span>
<span style="position:absolute;white-space:pre;font-family:'Liberation Sans', sans-serif;font-size:13.2px;font-weight:400;color:#595959;line-height:normal;right:485.40px;transform-origin:100% 0;top:808.32px;transform:scaleX(0.9405);-webkit-text-stroke:0.12px #595959;">0</span>
<span style="position:absolute;white-space:pre;font-family:'Liberation Sans', sans-serif;font-size:13.2px;font-weight:400;color:#595959;line-height:normal;right:397.00px;transform-origin:100% 0;top:808.32px;transform:scaleX(0.9405);-webkit-text-stroke:0.12px #595959;">0</span>
<span style="position:absolute;white-space:pre;font-family:'Liberation Sans', sans-serif;font-size:13.2px;font-weight:400;color:#595959;line-height:normal;right:316.60px;transform-origin:100% 0;top:808.32px;transform:scaleX(0.9405);-webkit-text-stroke:0.12px #595959;">0</span>
<span style="position:absolute;white-space:pre;font-family:'Liberation Sans', sans-serif;font-size:13.2px;font-weight:400;color:#595959;line-height:normal;right:211.40px;transform-origin:100% 0;top:808.32px;transform:scaleX(0.9348);-webkit-text-stroke:0.12px #595959;">$0.00</span>
<span style="position:absolute;white-space:pre;font-family:'Liberation Sans', sans-serif;font-size:13.2px;font-weight:400;color:#595959;line-height:normal;right:102.00px;transform-origin:100% 0;top:808.32px;transform:scaleX(0.9362);-webkit-text-stroke:0.12px #595959;">$15.00</span>
<span style="position:absolute;white-space:pre;font-family:'Liberation Sans', sans-serif;font-size:13.2px;font-weight:400;color:#4a6bd2;line-height:normal;left:1843.00px;transform-origin:0 0;top:808.32px;transform:scaleX(0.9291);text-decoration:underline;text-decoration-thickness:1.3px;text-underline-offset:1.5px;-webkit-text-stroke:0.15px #4a6bd2;">View</span>
<span style="position:absolute;white-space:pre;font-family:'Liberation Sans', sans-serif;font-size:13.2px;font-weight:400;color:#666;line-height:normal;right:212.50px;transform-origin:100% 0;top:842.62px;transform:scaleX(0.8454);-webkit-text-stroke:0.3px #666;">$2,374.81</span>
<span style="position:absolute;white-space:pre;font-family:'Liberation Sans', sans-serif;font-size:13.2px;font-weight:400;color:#666;line-height:normal;right:103.20px;transform-origin:100% 0;top:842.62px;transform:scaleX(0.8559);-webkit-text-stroke:0.3px #666;">$510.81</span>
<span style="position:absolute;white-space:pre;font-family:'Liberation Sans', sans-serif;font-size:13px;font-weight:400;color:#737373;line-height:normal;left:102.30px;transform-origin:0 0;top:892.71px;transform:scaleX(0.8792);-webkit-text-stroke:0.2px #737373;">Viewing </span>
<span style="position:absolute;white-space:pre;font-family:'Liberation Sans', sans-serif;font-size:13px;font-weight:700;color:#5a5a5a;line-height:normal;left:145.50px;transform-origin:0 0;top:892.71px;transform:scaleX(0.8492);">16 items</span>
<span style="position:absolute;white-space:pre;font-family:'Liberation Sans', sans-serif;font-size:14.8px;font-weight:400;color:#a6a6a6;line-height:normal;left:1562.56px;transform-origin:0 0;top:892.16px;transform:scaleX(0.8997);-webkit-text-stroke:0.25px #a6a6a6;">First</span>
<span style="position:absolute;white-space:pre;font-family:'Liberation Sans', sans-serif;font-size:14.8px;font-weight:400;color:#a6a6a6;line-height:normal;left:1608.36px;transform-origin:0 0;top:892.16px;transform:scaleX(0.8786);-webkit-text-stroke:0.25px #a6a6a6;">Previous</span>
<span style="position:absolute;white-space:pre;font-family:'Liberation Sans', sans-serif;font-size:14.8px;font-weight:700;color:#fff;line-height:normal;left:1685.05px;transform-origin:0 0;top:892.16px;transform:scaleX(0.8987);">1</span>
<span style="position:absolute;white-space:pre;font-family:'Liberation Sans', sans-serif;font-size:14.8px;font-weight:400;color:#a6a6a6;line-height:normal;left:1718.47px;transform-origin:0 0;top:892.16px;transform:scaleX(0.8892);-webkit-text-stroke:0.25px #a6a6a6;">Next</span>
<span style="position:absolute;white-space:pre;font-family:'Liberation Sans', sans-serif;font-size:14.8px;font-weight:400;color:#a6a6a6;line-height:normal;left:1765.89px;transform-origin:0 0;top:892.16px;transform:scaleX(0.9018);-webkit-text-stroke:0.25px #a6a6a6;">Last</span>
<span style="position:absolute;white-space:pre;font-family:'Liberation Sans', sans-serif;font-size:14.8px;font-weight:400;color:#222;line-height:normal;left:1815.70px;transform-origin:0 0;top:892.16px;transform:scaleX(0.8501);">25</span>
<!-- annotations -->
<svg class="abs" style="left:0;top:0" width="1926" height="952" viewBox="0 0 1926 952">
<g stroke="#ef8532" stroke-width="2" fill="#ef8532">
<line x1="55" y1="139" x2="87" y2="139"/><circle cx="87.5" cy="139" r="4.4" stroke="none"/>
<line x1="55" y1="364" x2="87" y2="364"/><circle cx="87.5" cy="364" r="4.4" stroke="none"/>
<line x1="1761" y1="314" x2="1840" y2="277.5" stroke-width="1.6"/><circle cx="1840" cy="277.5" r="4.2" stroke="none"/>
</g>
<g fill="none" stroke="#ef8532" stroke-width="2.5" stroke-linecap="butt" stroke-linejoin="round">
<path d="M38.3 147.7 V127.6 L31.6 131.9"/>
<path d="M31.7 357.8 C31.9 354.2 34.5 352.7 37.5 352.7 C40.8 352.7 43 354.8 43 357.6 C43 359.7 42 361.1 40.6 362.6 L31.9 371.6 H44.1"/>
<path d="M1739.6 311.8 C1740 308.6 1742.4 307.4 1745.1 307.4 C1748.4 307.4 1750.5 309.4 1750.5 312 C1750.5 314.7 1748.3 316.4 1745 316.4 H1743.3 M1745 316.4 C1748.9 316.4 1751 318.5 1751 321.4 C1751 324.6 1748.5 326.5 1745.1 326.5 C1741.8 326.5 1739.3 324.8 1739 321.7"/>
</g>
</svg>
</body></html>
